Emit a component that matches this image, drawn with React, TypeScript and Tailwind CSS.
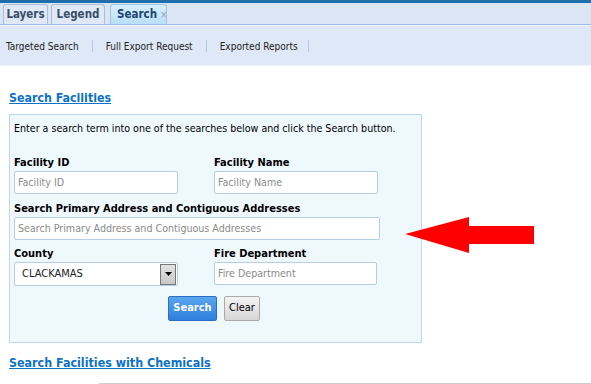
import React from "react";

const Field = ({
  label,
  placeholder,
  width,
}: {
  label: string;
  placeholder: string;
  width: string;
}) => (
  <div className="flex flex-col">
    <label className="text-[11px] font-bold text-black leading-[14px] mb-[1px]">{label}</label>
    <div
      className={`${width} h-[23px] bg-white border border-[#b5cde6] rounded-[2px] flex items-center px-[3px] text-[10.6px] text-[#8a8a8a]`}
    >
      {placeholder}
    </div>
  </div>
);

const App = () => {
  return (
    <div
      className="w-[591px] h-[384px] overflow-hidden bg-white relative"
      style={{ fontFamily: '"DejaVu Sans Condensed", "DejaVu Sans", sans-serif' }}
    >
      <div className="h-[3px] bg-[#1f6fad]" />
      {/* tab strip */}
      <div className="h-[22px] bg-[#dbe5f4] flex items-end pl-[3px] gap-[3px] border-b border-[#99bbe8]">
        <div className="h-[20px] w-[45px] flex items-center justify-center rounded-t-[3px] border border-b-0 border-[#a9bfdc] bg-[#dfe8f5] text-[11.5px] font-bold text-[#3a4e6a]">
          Layers
        </div>
        <div className="h-[20px] w-[54px] flex items-center justify-center rounded-t-[3px] border border-b-0 border-[#a9bfdc] bg-[#dfe8f5] text-[11.5px] font-bold text-[#3a4e6a]">
          Legend
        </div>
        <div className="ml-[2px] h-[20px] w-[57px] flex items-center pl-[6px] gap-[3px] rounded-t-[3px] border border-b-0 border-[#a0c4e6] bg-gradient-to-b from-[#d8eefc] to-[#b9dff8] text-[11.5px] font-bold text-[#1d4670]">
          Search
          <span className="text-[10px] text-[#9fb2c6] leading-none">×</span>
        </div>
      </div>
      {/* toolbar */}
      <div className="h-[41px] bg-[#dfe8f6] border-t border-[#f2f6fc] border-b border-[#a9c3e3] flex items-center pl-[6px] pt-[1px] text-[10px] text-[#222]">
        <span>Targeted Search</span>
        <span className="mx-[13px] w-px h-[12px] bg-[#b3c8e6]" />
        <span>Full Export Request</span>
        <span className="mx-[13px] w-px h-[12px] bg-[#b3c8e6]" />
        <span>Exported Reports</span>
        <span className="mx-[10px] w-px h-[12px] bg-[#b3c8e6]" />
      </div>
      {/* content */}
      <div className="pl-[9px] pt-[24px]">
        <div className="text-[12.3px] font-bold text-[#0b72c8] underline leading-[16px] underline-offset-[1px]">
          Search Facilities
        </div>
        <div className="mt-[8px] w-[413px] h-[229px] bg-[#eef8fd] border border-[#bcd8f0] pl-[4px] pt-[6px]">
          <div className="text-[10.6px] text-black leading-[14px]">
            Enter a search term into one of the searches below and click the Search button.
          </div>
          <div className="mt-[21px] flex gap-[36px]">
            <Field label="Facility ID" placeholder="Facility ID" width="w-[164px]" />
            <Field label="Facility Name" placeholder="Facility Name" width="w-[164px]" />
          </div>
          <div className="mt-[8px]">
            <Field
              label="Search Primary Address and Contiguous Addresses"
              placeholder="Search Primary Address and Contiguous Addresses"
              width="w-[366px]"
            />
          </div>
          <div className="mt-[7px] flex gap-[36px]">
            <div className="flex flex-col">
              <label className="text-[11px] font-bold text-black leading-[14px] mb-[1px]">County</label>
              <div className="w-[164px] h-[24px] bg-white border border-[#b5cde6] rounded-[2px] flex items-center justify-between pl-[7px] pr-[1px] text-[11px] text-[#222]">
                CLACKAMAS
                <div className="w-[16px] h-[21px] bg-gradient-to-b from-[#e2e2e2] to-[#c8c8c8] border border-[#777] flex items-center justify-center">
                  <svg width="7" height="4" viewBox="0 0 7 4">
                    <path d="M0 0h7L3.5 4z" fill="#000" />
                  </svg>
                </div>
              </div>
            </div>
            <Field label="Fire Department" placeholder="Fire Department" width="w-[163px]" />
          </div>
          <div className="mt-[10px] flex gap-[7px] pl-[154px]">
            <button className="w-[49px] h-[25px] rounded-[2px] border border-[#2a6fc2] bg-gradient-to-b from-[#5aa6f0] to-[#2d7fdc] text-white text-[11px] font-bold">
              Search
            </button>
            <button className="w-[36px] h-[25px] rounded-[2px] border border-[#aaa] bg-gradient-to-b from-[#f4f4f4] to-[#d6d6d6] text-black text-[11px]">
              Clear
            </button>
          </div>
        </div>
        <div className="mt-[12px] text-[12.4px] font-bold text-[#0b72c8] underline leading-[16px] underline-offset-[1px]">
          Search Facilities with Chemicals
        </div>
        <div className="ml-[89px] mt-[12px] h-[10px] border-t border-l border-[#c8d0c8] rounded-tl-[3px]" />
      </div>
      {/* red arrow */}
      <svg className="absolute left-[404px] top-[216px]" width="132" height="38" viewBox="0 0 132 38">
        <path d="M1 18 L65 1 L65 10 L130 10 L130 28 L65 28 L65 37 Z" fill="#ff0000" />
      </svg>
    </div>
  );
};

export default App;
